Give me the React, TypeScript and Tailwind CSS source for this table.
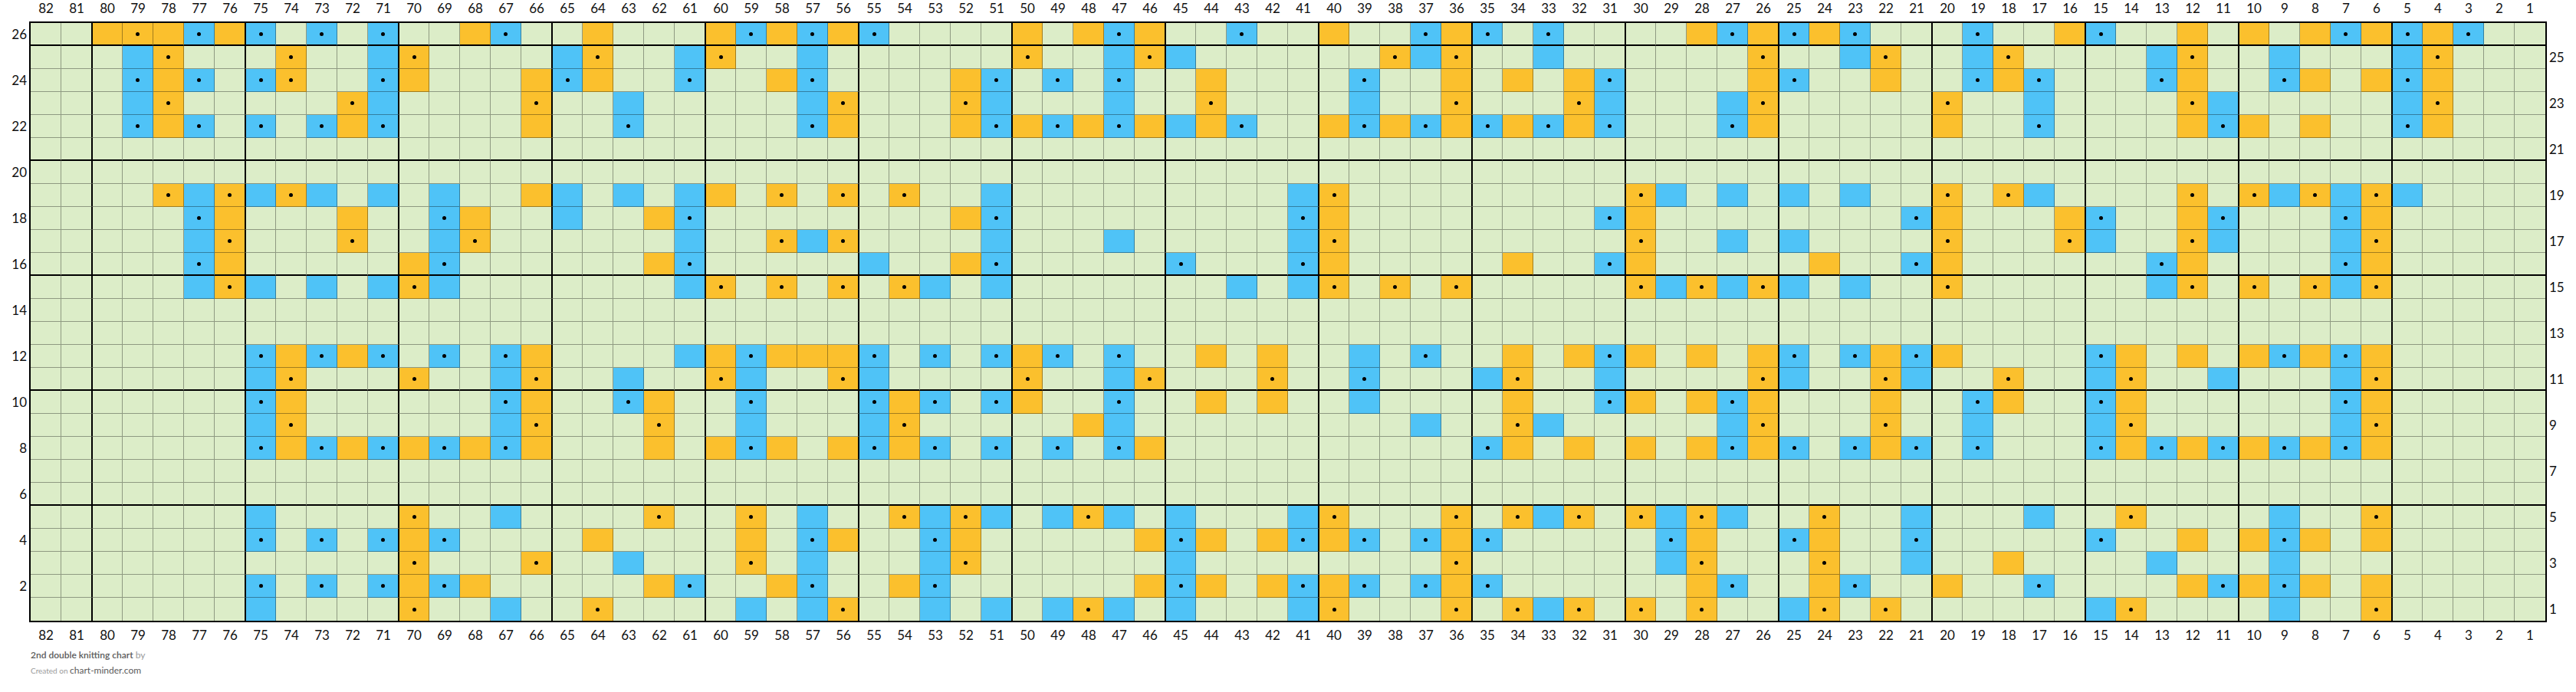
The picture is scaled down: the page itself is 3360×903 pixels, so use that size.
import React from 'react';

type Code = '.' | 'o' | 'O' | 'b' | 'B';

const COLS = 82;

// columns 82..62 | 61..41 | 40..20 | 19..1
const ROW_DATA: Array<[number, string[]]> = [
  [26, ['..oOoBoB.B.B..oB..o..', '.oBoBoB....o.oBo..B..', 'o..BoB.B....oBoBoB...', 'B..oB..o.o.oBoBoB..']],
  [25, ['...bO...O..bO....bO..', 'bO..b......O..bOb....', '..ObO..b......O..bO..', 'bO....bO..b...bO...']],
  [24, ['...BoB.BO..Bo...oBo..', 'B..oB....oB.B.B..o...', '.B..o.o.oB....oB..o..', 'BoB...Bo..Bo.oBo...']],
  [23, ['...bO.....Ob....O..b.', '....bO...Ob...b..O...', '.b..O...Ob...bO.....O', '..b....Ob.....bO...']],
  [22, ['...BoB.B.BoB....o..B.', '....Bo...oBoBoBoboB..', 'oBoBoBoBoB...Bo.....o', '..B....oBo.o..Bo...']],
  [21, []],
  [20, []],
  [19, ['....ObObOb.b.b..ob.b.', 'bo.O.O.O..b.........b', 'O.........Ob.b.b.b..O', '.Ob....O.ObObOb....']],
  [18, ['.....Bo...o..Bo..b..o', 'B........oB.........B', 'o........Bo........Bo', '...oB..oB...Bo.....']],
  [17, ['.....bO...O..bO......', 'b..ObO....b...b.....b', 'O.........O..b.b....O', '...Ob..Ob...bO.....']],
  [16, ['.....Bo.....oB......o', 'B.....b..oB.....B...B', 'o.....o..Bo.....o..Bo', '......Bo....Bo.....']],
  [15, ['.....bOb.b.bOb.......', 'bO.O.O.Ob.b.......b.b', 'O.O.O.....ObObOb.b..O', '......bO.O.ObO.....']],
  [14, []],
  [13, []],
  [12, ['.......BoBoB.B.Bo....', 'boBoooB.B.BoB.B..o.o.', '.b.B..o.oBo.o.oB.BoBo', '....Bo.o.oBoBo.....']],
  [11, ['.......bO...O..bO..b.', '.Ob..Ob....O..bO...O.', '.B...bO..b....Ob..Ob.', '.O..bO..b...bO.....']],
  [10, ['.......Bo......Bo..Bo', '..B...BoB.Bo..B..o.o.', '.b....o..Bo.oBo...o..', 'Bo..Bo......Bo.....']],
  [9, ['.......bO......bO...O', '..b...bO.....ob......', '...b..Ob.....bO...O..', 'b...bO......bO.....']],
  [8, ['.......BoBoBoBoBo...o', '.oBo.oBoB.B.B.Bo.....', '.....Bo.o.o.oBoB.BoB.', 'B...BoBoBoBoBo.....']],
  [7, []],
  [6, []],
  [5, ['.......b....O..b....O', '..O.b..ObOb.bOb.b...b', 'O...O.ObO.ObOb..O..b.', '..b..O....b..O.....']],
  [4, ['.......B.B.BoB....o..', '..o.Bo..Bo.....oBo.oB', 'oB.BoB.....Bo..Bo..B.', '....B..o.oBo.o.....']],
  [3, ['............O...O..b.', '..O.b...bO......b....', '....O......bO...O..b.', '.o....b...b........']],
  [2, ['.......B.B.BoBo.....o', 'B..oB..oB......oBo.oB', 'oB.BoB......oB..oB..o', '..B....oBoBo.o.....']],
  [1, ['.......b....O..b..O..', '..b.bO..b.b.bOb.b...b', 'O...O.ObO.O.O..bO.O..', '....bO....b..O.....']],
];

const ROWS = ROW_DATA.map(([row, parts]) => {
  const line = (parts.join('') + '.'.repeat(COLS)).slice(0, COLS);
  return { row, cells: line.split('') as Code[] };
});

const COL_NUMBERS = Array.from({ length: COLS }, (_, i) => COLS - i);

function Cell({ code, col, row }: { code: Code; col: number; row: number }) {
  const bg =
    code === 'o' || code === 'O'
      ? 'bg-[#fbc02d]'
      : code === 'b' || code === 'B'
        ? 'bg-[#4fc3f7]'
        : 'bg-[#dcedc8]';
  // thick 5-stitch lines straddle the boundary: 1px on each neighbouring cell
  const right = col === 1 ? '' : (col - 1) % 5 === 0 ? 'border-r border-r-black' : 'border-r border-r-black/35';
  const left = col % 5 === 0 && col !== COLS ? 'border-l border-l-black' : '';
  const bottom =
    row === 1 ? '' : (row - 1) % 5 === 0 ? 'border-b-2 border-b-black' : 'border-b border-b-black/35';
  const dotted = code === 'O' || code === 'B';

  return (
    <div className={`flex h-[30px] w-10 shrink-0 items-center justify-center ${bg} ${left} ${right} ${bottom}`}>
      {dotted ? <span className="h-[5px] w-[5px] rounded-full bg-black" /> : null}
    </div>
  );
}

function ColumnLabels({ className }: { className: string }) {
  return (
    <div className={`flex pl-10 ${className}`}>
      {COL_NUMBERS.map((n) => (
        <div key={n} className="w-10 shrink-0 text-center text-[17px] leading-[22px]">
          {n}
        </div>
      ))}
    </div>
  );
}

export default function App() {
  return (
    <div className="h-[903px] w-[3360px] overflow-hidden bg-white font-['Lato','Liberation_Sans',sans-serif] text-[#111]">
      <ColumnLabels className="h-[30px]" />

      <div className="flex">
        <div className="flex w-10 flex-col">
          {ROWS.map(({ row }) => (
            <div key={row} className="h-[30px] pr-[5px] text-right text-[17px] leading-[30px]">
              {row % 2 === 0 ? row : ''}
            </div>
          ))}
        </div>

        <div className="flex flex-col outline-2 outline-black">
          {ROWS.map(({ row, cells }) => (
            <div key={row} className="flex">
              {cells.map((code, i) => (
                <Cell key={i} code={code} col={COLS - i} row={row} />
              ))}
            </div>
          ))}
        </div>

        <div className="flex w-10 flex-col">
          {ROWS.map(({ row }) => (
            <div key={row} className="h-[30px] pl-[5px] text-[17px] leading-[30px]">
              {row % 2 === 1 ? row : ''}
            </div>
          ))}
        </div>
      </div>

      <ColumnLabels className="h-[36px] pt-2" />

      <div className="pl-10">
        <p className="text-[12px] leading-[18px] text-[#5a5a5a]">
          <span className="font-semibold">2nd double knitting chart</span>{' '}
          <span className="text-[#9a9a9a]">by</span>
        </p>
        <p className="leading-[18px] text-[#9a9a9a]">
          <span className="text-[10px]">Created on </span>
          <span className="text-[12px] text-[#5a5a5a]">chart-minder.com</span>
        </p>
      </div>
    </div>
  );
}
